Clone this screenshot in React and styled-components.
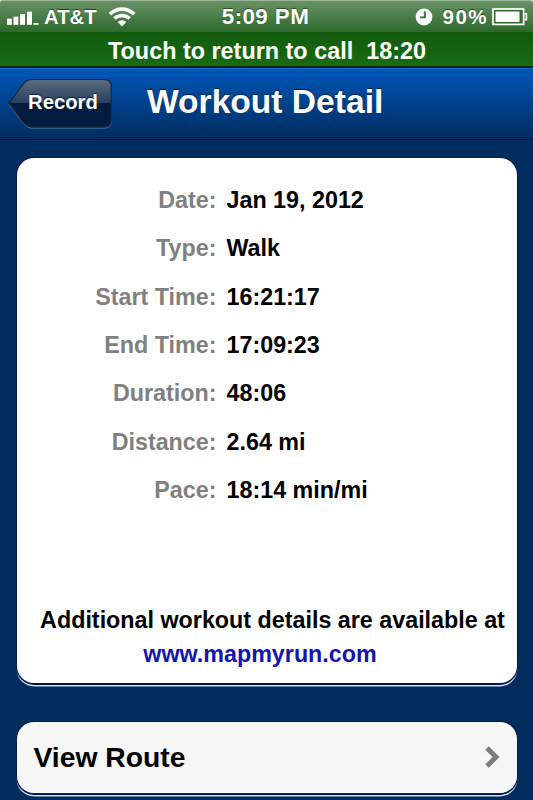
import React from 'react'
import styled, { createGlobalStyle } from 'styled-components';

const details = [
  { label: 'Date:', value: 'Jan 19, 2012' },
  { label: 'Type:', value: 'Walk' },
  { label: 'Start Time:', value: '16:21:17' },
  { label: 'End Time:', value: '17:09:23' },
  { label: 'Duration:', value: '48:06' },
  { label: 'Distance:', value: '2.64 mi' },
  { label: 'Pace:', value: '18:14 min/mi' },
];

function StatusBar() {
  return (
    <StatusBarStyled>
      <div className="left">
        <svg width="33" height="18" viewBox="0 0 33 18" fill="#fff">
          <rect x="0" y="10.6" width="4.8" height="6.2" />
          <rect x="6.5" y="8.6" width="4.8" height="8.2" />
          <rect x="13" y="6" width="5" height="10.8" />
          <rect x="20" y="3.6" width="5" height="13.2" />
          <rect x="26.5" y="15" width="5" height="1.8" />
        </svg>
        <StatusText $size={20.3} className="carrier">AT&amp;T</StatusText>
        <svg className="wifi" width="28" height="21" viewBox="0 0 28 21" fill="none" stroke="#fff">
          <path d="M1.9 8.1 A17 17 0 0 1 26.1 8.1" strokeWidth="3.7" />
          <path d="M6.4 12.6 A10.7 10.7 0 0 1 21.6 12.6" strokeWidth="3.6" />
          <path d="M14 20.4 L9.7 16.1 A6 6 0 0 1 18.3 16.1 Z" fill="#fff" stroke="none" />
        </svg>
      </div>
      <StatusText $size={22.4} $spacing={0.4} className="time">5:09 PM</StatusText>
      <div className="right">
        <svg width="18" height="18" viewBox="0 0 18 18">
          <circle cx="9" cy="9" r="8.4" fill="#fff" />
          <path d="M9.8 3.6 V9.4 H5" fill="none" stroke="#356b33" strokeWidth="1.9" />
        </svg>
        <StatusText $size={20.6} $spacing={1.4} className="percent">90%</StatusText>
        <svg width="36" height="18" viewBox="0 0 36 18">
          <rect x="1" y="1" width="30.6" height="15.4" fill="#356b33" stroke="#fff" strokeWidth="1.7" />
          <rect x="3.5" y="3.5" width="24" height="10.4" fill="#fff" />
          <path d="M32.3 5.8 H34.4 V11.6 H32.3" fill="none" stroke="#fff" strokeWidth="1.6" />
        </svg>
      </div>
    </StatusBarStyled>
  )
}

function BackButton() {
  return (
    <BackButtonStyled>
      <svg width="106" height="52" viewBox="0 0 106 52">
        <defs>
          <linearGradient id="back" x1="0" y1="0" x2="0" y2="1">
            <stop offset="0" stopColor="#5d6c80" />
            <stop offset="0.5" stopColor="#26405f" />
            <stop offset="0.5" stopColor="#041c3b" />
            <stop offset="1" stopColor="#001c40" />
          </linearGradient>
        </defs>
        <path d="M1 25.5 L15.5 6 Q19.5 1.8 24 1.8 H96 Q103.3 1.8 103.3 9 V42 Q103.3 49.2 96 49.2 H24 Q19.5 49.2 15.5 45 Z" fill="none" stroke="#4a7096" strokeWidth="1" />
        <path d="M1 24.2 L15.5 4.6 Q19.5 .4 24 .4 H96 Q103.2 .4 103.2 7.6 V40.4 Q103.2 47.8 96 47.8 H24 Q19.5 47.8 15.5 43.6 Z" fill="url(#back)" stroke="#18283d" strokeWidth="1.4" />
      </svg>
      <span>Record</span>
    </BackButtonStyled>
  )
}

function App() {
  return (
    <Screen>
      <GlobalStyle />
      <StatusBar />
      <CallBar>Touch to return to call&nbsp; 18:20</CallBar>
      <NavBar>
        <BackButton />
        <h1>Workout Detail</h1>
      </NavBar>
      <Content>
        <DetailCard>
          <dl>
            {details.map(({ label, value }) => (
              <DetailRow key={label}>
                <dt>{label}</dt>
                <dd>{value}</dd>
              </DetailRow>
            ))}
          </dl>
          <Note>
            Additional workout details are available at
            <a>www.mapmyrun.com</a>
          </Note>
        </DetailCard>
        <RouteCard>
          <span>View Route</span>
          <svg width="15" height="22" viewBox="0 0 15 22" fill="none" stroke="#7e7e7e" strokeWidth="5">
            <path d="M2 1.9 L11 11 L2 20.1" />
          </svg>
        </RouteCard>
      </Content>
    </Screen>
  );
}

export default App;


const GlobalStyle = createGlobalStyle`
  body{
    margin: 0;
    background-color: #002c5e;
    font-family: "Liberation Sans", Arial, sans-serif;
    font-weight: 700;
  }
  *{
    box-sizing: border-box;
  }
  svg{
    display: block;
    flex-shrink: 0;
  }
`

const Screen = styled.div`
  display: flex;
  flex-direction: column;
  width: 533px;
  height: 800px;
  overflow: hidden;
  background: linear-gradient(#dfe6dd 8px, #002c5e 8px);
`

const StatusBarStyled = styled.header`
  display: grid;
  grid-template-columns: 1fr auto 1fr;
  align-items: center;
  height: 32px;
  flex-shrink: 0;
  padding: 0 5px 0 7px;
  border-top: 1px solid #9ab597;
  border-radius: 3px 3px 0 0;
  background: linear-gradient(#6a9166, #2c692b);
  .left, .right{
    display: flex;
    align-items: center;
  }
  .right{
    justify-content: flex-end;
  }
  .carrier{
    margin-left: 4px;
  }
  .wifi{
    margin-left: 11px;
  }
  .time{
    margin-right: 4px;
  }
  .percent{
    margin: 0 4px 0 10px;
  }
`

const StatusText = styled.span`
  font-size: ${({ $size }) => $size}px;
  line-height: 30px;
  letter-spacing: ${({ $spacing }) => $spacing || 0}px;
  white-space: nowrap;
  color: #fff;
  text-shadow: 0 -1px 1px rgba(0, 40, 0, .6);
`

const CallBar = styled.div`
  height: 36px;
  flex-shrink: 0;
  padding-left: 1px;
  border-bottom: 2px solid #0b2312;
  background: linear-gradient(#125a0d, #186c12);
  font-size: 23.4px;
  line-height: 38px;
  text-align: center;
  color: #fff;
`

const NavBar = styled.nav`
  display: flex;
  height: 72px;
  flex-shrink: 0;
  padding: 10px 0 0 8px;
  border-top: 1px solid #1068c4;
  border-bottom: 1px solid #060c14;
  background: linear-gradient(#0057b8, #002c5e);
  h1{
    margin: 0 0 0 33px;
    font-size: 33.6px;
    line-height: 46px;
    white-space: nowrap;
    color: #fff;
    text-shadow: 0 -1.5px 1px rgba(0, 15, 45, .7);
  }
`

const BackButtonStyled = styled.div`
  display: grid;
  width: 106px;
  height: 52px;
  flex-shrink: 0;
  svg, span{
    grid-area: 1 / 1;
  }
  span{
    padding-left: 20px;
    font-size: 20.3px;
    line-height: 47px;
    color: #fff;
    text-shadow: 0 -1.5px 1px rgba(0, 0, 0, .6);
  }
`

const Content = styled.main`
  display: flex;
  flex-direction: column;
  gap: 38.5px;
  padding: 18px 16.5px 0;
`

const Card = styled.section`
  flex-shrink: 0;
  border-radius: 17px;
  background-color: ${({ $fill }) => $fill || '#fff'};
  box-shadow: 0 0 0 1px #001c4c, 0 1.5px 0 .4px #001c4c, 0 3px 0 .4px #d5deea;
`

const DetailCard = styled(Card)`
  height: 525px;
  padding-top: 18px;
  font-size: 23.3px;
  dl{
    margin: 0;
  }
`

const DetailRow = styled.div`
  display: grid;
  grid-template-columns: 200px 1fr;
  column-gap: 10px;
  height: 48.35px;
  line-height: 48.5px;
  dt{
    text-align: right;
    color: #808080;
  }
  dd{
    margin: 0;
    color: #000;
  }
`

const Note = styled.p`
  margin: 90px 0 0;
  padding-left: 12px;
  line-height: 33.5px;
  white-space: nowrap;
  text-align: center;
  color: #000;
  a{
    display: block;
    padding-right: 25px;
    color: #1515ad;
  }
`

const RouteCard = styled(Card).attrs({ $fill: '#f6f6f6' })`
  display: flex;
  justify-content: space-between;
  align-items: center;
  height: 71.5px;
  padding: 0 17px 0 17px;
  border-bottom: 1.5px solid #fff;
  font-size: 28.3px;
  color: #000;
  span{
    padding-top: 2px;
  }
`
